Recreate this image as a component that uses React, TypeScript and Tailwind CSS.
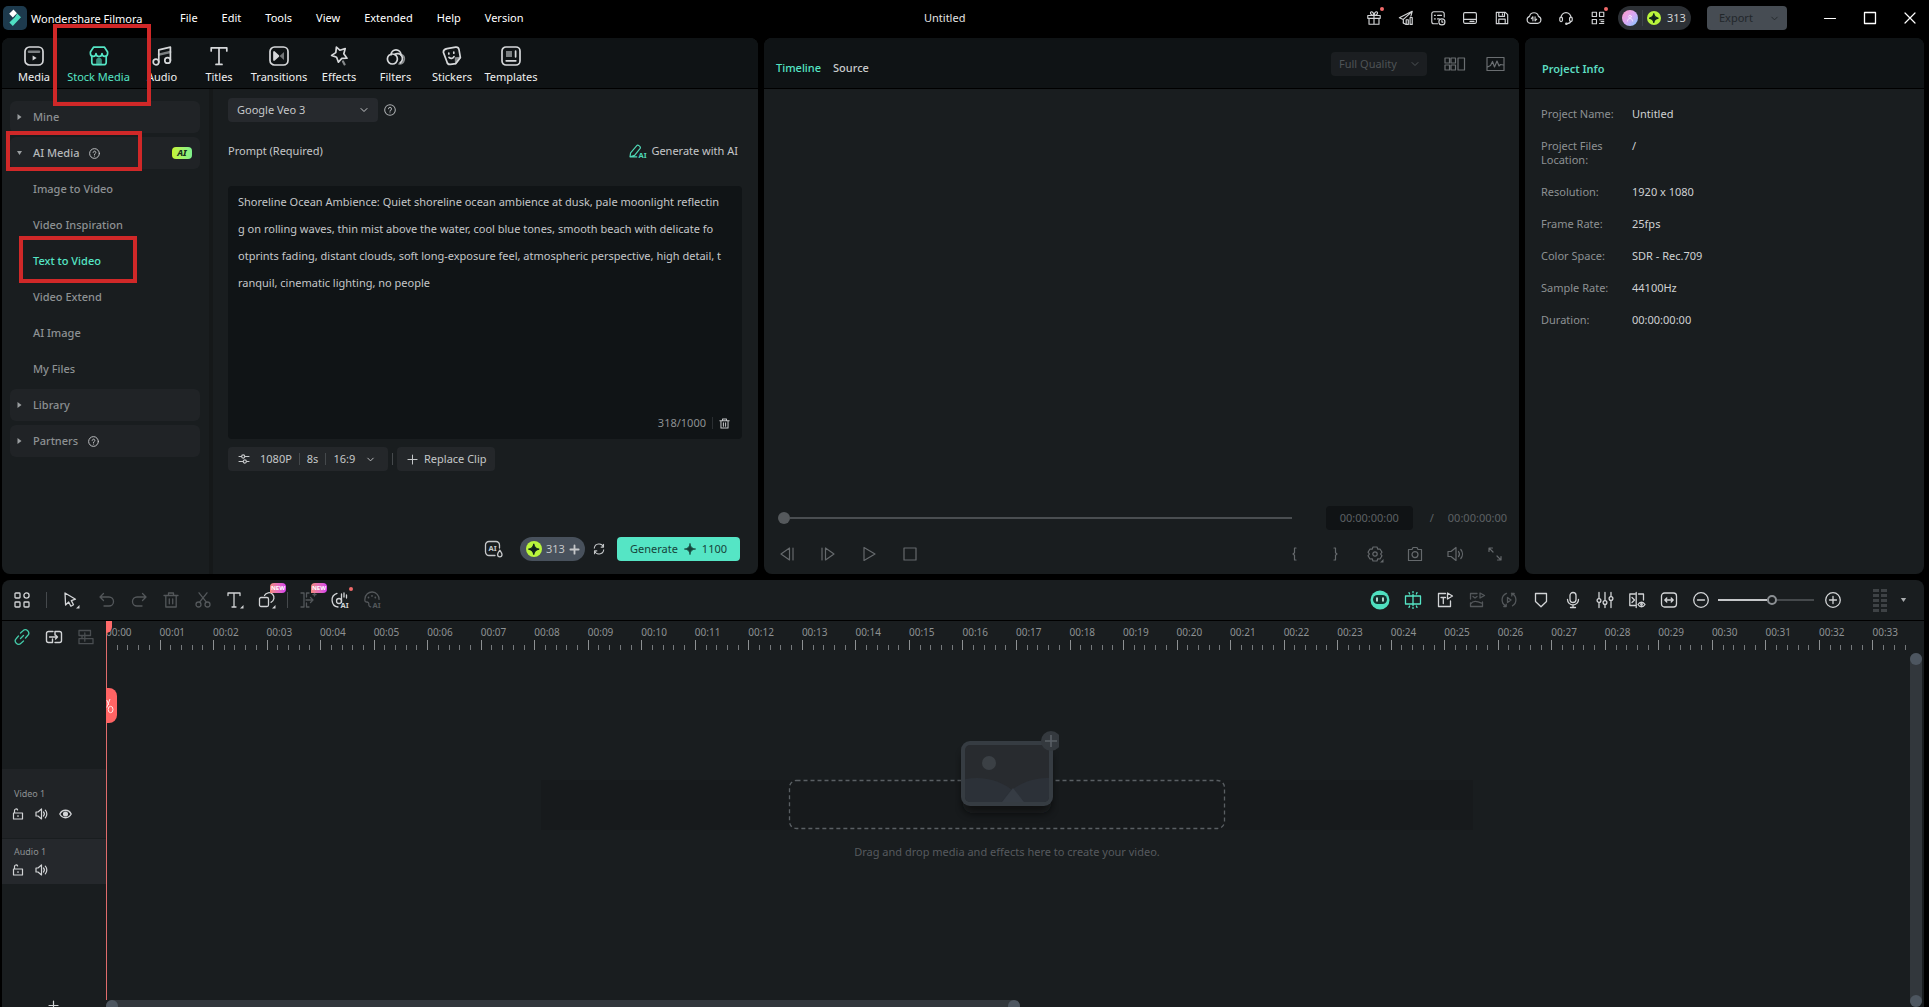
import { useState, type ReactNode } from 'react'
import { ChevronDown } from 'lucide-react'

type IconProps = { size?: number; w?: number; children: ReactNode; className?: string; sw?: number; vb?: string }

function Svg({ size = 18, w, children, className = '', sw = 1.3, vb = '0 0 18 18' }: IconProps) {
  return (
    <svg
      width={w ?? size}
      height={size}
      viewBox={vb}
      fill="none"
      stroke="currentColor"
      strokeWidth={sw}
      strokeLinecap="round"
      strokeLinejoin="round"
      className={`shrink-0 ${className}`}
      aria-hidden="true"
    >
      {children}
    </svg>
  )
}

const SPARK = 'M8 0.5C8.6 5.4 10.6 7.4 15.5 8C10.6 8.6 8.6 10.6 8 15.5C7.4 10.6 5.4 8.6 0.5 8C5.4 7.4 7.4 5.4 8 0.5Z'

const corner = <path d="M17.5 14v3.5H14z" fill="currentColor" stroke="none" />

const MENUS = ['File', 'Edit', 'Tools', 'View', 'Extended', 'Help', 'Version']

const TABS: [string, string, ReactNode][] = [
  ['Media', 'w-[62px]', <><rect x="1" y="1" width="18" height="18" rx="4.5" /><path d="M5 5.8h10" strokeWidth="2.6" opacity=".55" /><path d="M8.6 9.6v4.8l4-2.4z" fill="currentColor" stroke="none" /></>],
  ['Stock Media', 'w-[67px]', <><path d="M4.5 1.2h11L18.6 6v1.6a2.6 2.6 0 0 1-5.6 0 3 3 0 0 1-6 0 2.6 2.6 0 0 1-5.6 0V6z" /><path d="M2.8 10v6.5A2.2 2.2 0 0 0 5 18.7h10a2.2 2.2 0 0 0 2.2-2.2V10" /><path d="M8 18.5v-4a2 2 0 0 1 4 0v4z" fill="currentColor" opacity=".6" /></>],
  ['Audio', 'w-[60px]', <><circle cx="4" cy="16" r="2.8" /><circle cx="15.6" cy="14.4" r="2.8" /><path d="M6.8 16V3.8L18.4 1.2v13" /><path d="M7 8.6l11.2-2.6" strokeWidth="2.4" opacity=".55" /></>],
  ['Titles', 'w-[54px]', <><path d="M2.2 5V1.8h15.6V5M10 1.8v16.4M7 18.4h6" /></>],
  ['Transitions', 'w-[66px]', <><rect x="1" y="1" width="18" height="18" rx="4.5" /><path d="M5 6v8l4.4-4z" fill="currentColor" /><path d="M15 6v8l-4.4-4z" fill="currentColor" opacity=".5" stroke="none" /></>],
  ['Effects', 'w-[54px]', <><path d="M7.4 1.2l3.4 3 5.4-1.6-1.4 5.2 3.2 4.400-5.200.2-3.400 3.800-1.800-5L2.600 9.400 6.800 6.600z" /><path d="M14 15.400l1.600 3" strokeWidth="2.200" opacity=".6" /></>],
  ['Filters', 'w-[59px]', <><path d="M5 8.800a5 5 0 1 1 10 0" /><circle cx="6.400" cy="13" r="5" /><path d="M8.600 8.400a5 5 0 0 1 5.600 8.400" /><path d="M15.600 8.600a5 5 0 0 1-2.600 9.400" opacity=".6" /></>],
  ['Stickers', 'w-[54px]', <><path d="M5 2.600l8.600-1.400a3 3 0 0 1 3.400 2.400l1.400 8-4.600 6-5.400.8a3 3 0 0 1-3.400-2.400L1.400 6.400C1.200 4.200 2.600 3 5 2.600z" /><path d="M18.200 11.600l-4.600.6.2 5.400z" fill="currentColor" opacity=".6" /><path d="M6.800 7v1M11.800 6.200v1M7 11.400c1.600 1.600 4 1.200 5-.8" /></>],
  ['Templates', 'w-16', <><rect x="1" y="1" width="18" height="18" rx="4" /><path d="M5 5h6v6H5z" fill="currentColor" opacity=".55" stroke="none" /><path d="M14.600 5.200v5.600M5.200 14.800h9.600" /></>],
]

const TITLE_ICONS: { name: string; dot?: boolean; d: ReactNode }[] = [
  { name: 'Gift', dot: true, d: <><path d="M2 6.200h14v3.200H2zM3.400 9.400V16h11.200V9.400M9 6.200V16M9 6C4 6 4.400 1.500 6.600 2 8.400 2.400 9 6 9 6s.6-3.600 2.400-4C13.600 1.500 14 6 9 6" /></> },
  { name: 'Share', d: <><path d="M6 14.500V10.600L1.500 8.800 16 1.500l-1.500 5.500M6 10.600L14.500 3" /><path d="M9 16.200l-3-1.700M9.200 11h2.400v5.200H9.200zM13.600 8.400H16v7.800h-2.400z" /></> },
  { name: 'Tasks', d: <><path d="M8.500 15.500H4.200a2.200 2.200 0 0 1-2.200-2.200V4.200A2.200 2.200 0 0 1 4.200 2h9.600A2.200 2.200 0 0 1 16 4.200V8M5 6h1M8.500 6H13M5 10h1M8.500 10h2" /><circle cx="13.400" cy="13.400" r="3.400" /><path d="M13.400 11.800v1.800h1.200" /></> },
  { name: 'Layout', d: <><rect x="1.800" y="3" width="14.400" height="12" rx="1.400" /><path d="M2 10.600h14M9 12.800h4.500" /></> },
  { name: 'Save', d: <><path d="M2.600 2.600h10.200l2.600 2.600v10.200H2.600zM5.400 2.800v4.400h6.400V2.800M5.400 15.200v-5h7.200v5M9.500 4.200v1.400" /></> },
  { name: 'Cloud', d: <><path d="M5 15a4 4 0 0 1-1-7.800 5.100 5.100 0 0 1 10 0A4 4 0 0 1 13 15z" /><path d="M7.800 12.200V7.600L6 9.600M10.200 7.600v4.600L12 10.200" /></> },
  { name: 'Support', d: <><path d="M3.400 8.600a5.600 5.600 0 0 1 11.200 0M14.600 12.400c-.6 2-2 2.800-4.400 3" /><rect x="2" y="8" width="3" height="5" rx="1.400" /><rect x="13" y="8" width="3" height="5" rx="1.400" /><circle cx="9.400" cy="15.400" r=".8" /></> },
  { name: 'Apps', dot: true, d: <><path d="M2.500 2.500h4.800v4.800H2.500zM10.700 2.500h4.800v4.800h-4.800zM2.500 10.700h4.800v4.800H2.500zM10.700 11h4.800M10.700 15.200h4.800M12.500 13.100h3" /></> },
]

const AI_ITEMS = ['Image to Video', 'Video Inspiration', 'Text to Video', 'Video Extend', 'AI Image', 'My Files']

const INFO: [string, string][] = [
  ['Project Name:', 'Untitled'],
  ['Project Files Location:', '/'],
  ['Resolution:', '1920 x 1080'],
  ['Frame Rate:', '25fps'],
  ['Color Space:', 'SDR - Rec.709'],
  ['Sample Rate:', '44100Hz'],
  ['Duration:', '00:00:00:00'],
]

const PROMPT = `Shoreline Ocean Ambience: Quiet shoreline ocean ambience at dusk, pale moonlight reflectin
g on rolling waves, thin mist above the water, cool blue tones, smooth beach with delicate fo
otprints fading, distant clouds, soft long-exposure feel, atmospheric perspective, high detail, t
ranquil, cinematic lighting, no people`

function Help({ size = 12, className = '' }: { size?: number; className?: string }) {
  return (
    <Svg size={size} className={className} vb="0 0 14 14" sw={1.200}>
      <circle cx="7" cy="7" r="6.200" />
      <path d="M5.300 5.600a1.700 1.700 0 1 1 2.600 1.500c-.7.4-.9.700-.9 1.300M7 10.200v.1" />
    </Svg>
  )
}

function Coin({ size = 14 }: { size?: number }) {
  return (
    <svg width={size} height={size} viewBox="0 0 16 16" className="shrink-0" aria-hidden="true">
      <circle cx="8" cy="8" r="8" fill="#b9f53c" />
      <g transform="translate(2 2.400) scale(.72)" fill="#10231c"><path d={SPARK} stroke="#10231c" strokeWidth="1.600" /></g>
    </svg>
  )
}

function TitleBar() {
  return (
    <header className="flex h-[38px] shrink-0 items-start pt-1.5 pl-[3px]">
      <div className="flex h-6 w-[177px] items-center gap-1">
        <svg width="24" height="24" viewBox="0 0 24 24" aria-hidden="true">
          <rect width="24" height="24" rx="5" fill="#1d3a4d" />
          <path d="M10.500 3.600L14 7.200 9.800 11.400 6.200 7.800z" fill="#fff" />
          <path d="M14.200 7.400L18 11.200 9.800 20 6.400 16.400 11.800 11.200z" fill="#4fe0c3" />
        </svg>
        <span className="pt-0.5 text-white">Wondershare Filmora</span>
      </div>
      <nav className="flex h-6 items-center gap-6 text-white">
        {MENUS.map((m) => <button key={m}>{m}</button>)}
      </nav>
      <div className="flex h-6 flex-1 items-center justify-center text-[#e4e4e4]">Untitled</div>
      <div className="flex h-6 items-center text-[#d2d4d6]">
        <div className="flex gap-4">
          {TITLE_ICONS.map((i) => (
            <button key={i.name} aria-label={i.name} className="relative">
              <Svg size={16}>{i.d}</Svg>
              {i.dot && <span className="absolute -top-[3px] -right-0.5 size-1 rounded-full bg-[#f06a6a]" />}
            </button>
          ))}
        </div>
        <div className="ml-3 flex h-6 w-[73px] items-center rounded-full bg-[#2c3035] pl-1">
          <span className="flex size-4 items-center justify-center rounded-full bg-linear-to-br from-[#ff9ac6] via-[#d9a8f5] to-[#6fc5ff]">
            <Svg size={8} className="text-white/70" sw={2}><circle cx="9" cy="6" r="3" /><path d="M3 16a6 6 0 0 1 12 0" /></Svg>
          </span>
          <span className="mx-1 h-4 w-px bg-[#3c4148]" />
          <Coin />
          <span className="ml-1.5">313</span>
        </div>
        <button disabled className="ml-4 flex h-6 w-20 items-center rounded bg-[#464c53] pl-3 text-[#22272b]">
          Export <ChevronDown size={11} className="ml-4" />
        </button>
        <button aria-label="Minimize" className="ml-[34px] text-white"><Svg size={18} sw={1.200}><path d="M3.500 9.500h11" /></Svg></button>
        <button aria-label="Maximize" className="ml-[22px] text-white"><Svg size={18} sw={1.300}><path d="M3.500 3.500h11v11h-11z" /></Svg></button>
        <button aria-label="Close" className="mr-2.5 ml-[22px] text-white"><Svg size={18} sw={1.200}><path d="M4 4l10 10M14 4L4 14" /></Svg></button>
      </div>
    </header>
  )
}

function Group({ label, open = false, help = false, badge = false }: { label: string; open?: boolean; help?: boolean; badge?: boolean }) {
  return (
    <button className={`flex h-8 items-center rounded-md bg-[#202326] pl-[7px] font-medium ${open ? 'text-[#b4b7b9]' : 'text-[#8d9193]'}`}>
      <svg width="5" height="6" viewBox="0 0 5 6" fill="#9a9ea0" aria-hidden="true">
        {open ? <path d="M0 1h5L2.500 5z" /> : <path d="M.5 0v6L4.500 3z" />}
      </svg>
      <span className="ml-[11px]">{label}</span>
      {help && <Help size={11} className="ml-2.5 text-[#c5c7c9]" />}
      {badge && (
        <span className="mr-2 ml-auto h-3 w-5 rounded-sm bg-linear-to-r from-[#c6f52c] to-[#7df08c] text-center text-[9px] leading-3 font-extrabold text-[#17301c] italic">AI</span>
      )}
    </button>
  )
}

function Sidebar() {
  const [active, setActive] = useState('Text to Video')
  return (
    <aside className="flex w-[211px] shrink-0 flex-col gap-1 border-r-4 border-[#151819] pt-3 pr-[9px] pl-2">
      <Group label="Mine" />
      <Group label="AI Media" open help badge />
      {AI_ITEMS.map((t) => (
        <button
          key={t}
          onClick={() => setActive(t)}
          className={`h-8 pl-[23px] text-left font-medium ${t === active ? 'text-[#55e5c5]' : 'text-[#8d9193]'}`}
        >
          {t}
        </button>
      ))}
      <Group label="Library" />
      <Group label="Partners" help />
    </aside>
  )
}

function Generator() {
  return (
    <section className="flex min-w-0 flex-1 flex-col pt-[9px] pr-4 pb-[13px] pl-[15px]">
      <div className="flex items-center gap-1.5">
        <label className="relative flex h-6 w-[150px] items-center">
          <select aria-label="Model" className="size-full appearance-none rounded bg-[#26292d] pl-[9px] text-[#c5c7c9]">
            <option>Google Veo 3</option>
          </select>
          <ChevronDown size={12} className="pointer-events-none absolute right-2 text-[#c5c7c9]" />
        </label>
        <button aria-label="Model help"><Help size={12} className="text-[#b0b3b5]" /></button>
      </div>
      <div className="mt-[17px] flex h-6 items-center justify-between text-[#c5c7c9]">
        <label htmlFor="prompt">Prompt (Required)</label>
        <button className="mr-1 flex items-center gap-1">
          <svg width="18" height="14" viewBox="0 0 18 14" fill="none" stroke="#4fd6b5" strokeWidth="1.200" strokeLinejoin="round" aria-hidden="true">
            <path d="M1 12.800l.6-4L7.800 1.600c1-1.200 4.400 1 3.400 2.800L5.600 11.400 1 12.800h7.200" />
            <text x="9.500" y="13.500" fill="#4fd6b5" stroke="none" fontSize="7.500" fontWeight="700">AI</text>
          </svg>
          Generate with AI
        </button>
      </div>
      <div className="mt-[23px] flex flex-[253] flex-col rounded bg-[#101416]">
        <textarea
          id="prompt"
          defaultValue={PROMPT}
          className="flex-1 resize-none overflow-hidden bg-transparent px-2.5 pt-0.5 leading-[27px] text-[#c5c7c9] outline-none"
        />
        <div className="flex h-8 items-center justify-end pr-3 text-[#8d9193]">
          318/1000
          <span className="mx-1.5 h-3 w-px bg-[#2a2e31]" />
          <button aria-label="Clear prompt" className="text-[#c5c7c9]">
            <Svg size={11} vb="0 0 14 14"><path d="M1 3.500h12M4.500 3.300V1.300h5v2M2.500 3.700v9h9v-9M5.600 6v4.500M8.400 6v4.500" /></Svg>
          </button>
        </div>
      </div>
      <div className="mt-2 flex h-6 items-center text-[#c5c7c9]">
        <button className="flex h-6 w-40 items-center rounded bg-[#24272a] pl-2.5">
          <Svg size={12} vb="0 0 12 12" sw={1.100}><path d="M1 3.500h2.600M6.800 3.500H11M1 8.500h4.200M8.400 8.500H11" /><circle cx="5.200" cy="3.500" r="1.600" /><circle cx="6.800" cy="8.500" r="1.600" /></Svg>
          <span className="ml-2.5">1080P</span>
          <span className="mx-[7px] h-3 w-px bg-[#45494c]" />
          8s
          <span className="mx-[7px] h-3 w-px bg-[#45494c]" />
          16:9
          <ChevronDown size={11} className="ml-2.5" />
        </button>
        <span className="mx-1 h-3 w-px bg-[#45494c]" />
        <button className="flex h-6 items-center gap-1.5 rounded bg-[#24272a] pr-2 pl-2.5">
          <Svg size={11} vb="0 0 12 12" sw={1.100}><path d="M6 1v10M1 6h10" /></Svg>
          Replace Clip
        </button>
      </div>
      <div className="flex-[66]" />
      <div className="mr-0.5 flex h-6 items-center justify-end text-[#c5c7c9]">
        <button aria-label="AI watermark" className="mr-4">
          <Svg size={18} w={20} vb="0 0 20 18">
            <path d="M11 15.500H5A3.500 3.500 0 0 1 1.500 12V5A3.500 3.500 0 0 1 5 1.500h7A3.500 3.500 0 0 1 15.500 5v3M15.800 10.200c1.400 2 2.200 3.200 2.200 4.400a2.200 2.200 0 0 1-4.400 0c0-1.200.8-2.400 2.200-4.400z" />
            <text x="4.500" y="11" fill="currentColor" stroke="none" fontSize="7.500" fontWeight="700">AI</text>
          </Svg>
        </button>
        <button className="flex h-6 w-[65px] items-center rounded-full bg-[#48515c] pl-1.5">
          <Coin size={16} />
          <span className="ml-1">313</span>
          <Svg size={11} vb="0 0 12 12" sw={2} className="ml-1"><path d="M6 1.500v9M1.500 6h9" /></Svg>
        </button>
        <button aria-label="Refresh" className="ml-2">
          <Svg size={12} vb="0 0 14 14" sw={1.200}><path d="M1.500 6a5.600 5.600 0 0 1 10.800-1.200V1.500M12.500 8a5.600 5.600 0 0 1-10.800 1.200v3.300M12.300 4.800H9.500M1.700 9.200h2.800" /></Svg>
        </button>
        <button className="ml-3 flex h-6 w-[123px] items-center justify-center gap-1.5 rounded bg-[#55e5c5] text-[#16433a]">
          Generate
          <svg width="12" height="12" viewBox="0 0 16 16" fill="#16433a" stroke="#16433a" aria-hidden="true"><path d={SPARK} /></svg>
          1100
        </button>
      </div>
    </section>
  )
}

function MediaPanel() {
  return (
    <div className="flex min-w-0 flex-[756] flex-col overflow-hidden rounded-lg bg-[#191d1f]">
      <nav className="flex h-[51px] shrink-0 border-b border-black bg-[#0f1315] pl-px">
        {TABS.map(([label, width, d], i) => (
          <button key={label} className={`flex flex-col items-center pt-2 ${width} ${i === 1 ? 'text-[#55e5c5]' : 'text-[#d6d8da]'}`}>
            <Svg size={20} sw={1.700} vb="0 0 20 20">{d}</Svg>
            <span className={`mt-[3px] leading-4 whitespace-nowrap ${i === 1 ? '' : 'text-[#f0f0f0]'}`}>{label}</span>
          </button>
        ))}
      </nav>
      <div className="flex min-h-0 flex-1">
        <Sidebar />
        <Generator />
      </div>
    </div>
  )
}

const PLAY_ICONS: [string, ReactNode][] = [
  ['Previous frame', <path d="M11.500 3v12L3 9zM15 3v12" />],
  ['Next frame', <path d="M6.500 3v12L15 9zM3 3v12" />],
  ['Play', <path d="M4 2.500v13L15 9z" />],
  ['Stop', <path d="M3 3h12v12H3z" />],
]
const VIEW_ICONS: [string, ReactNode][] = [
  ['Mark in', <path d="M10 3H8.500v4.800L7 9l1.500 1.200V15H10" />],
  ['Mark out', <path d="M8 3h1.500v4.800L11 9l-1.500 1.200V15H8" />],
  ['Settings', <><path d="M7 2h4l.8 2.200L14 4l2 3.200L14.600 9l1.400 1.800L14 14l-2.200-.2L11 16H7l-.8-2.200L4 14l-2-3.200L3.400 9 2 7.200 4 4l2.200.2z" /><circle cx="9" cy="9" r="2.200" />{corner}</>],
  ['Snapshot', <><path d="M2.500 4.500H6L7 2.500h4l1 2h3.500v11h-13z" /><circle cx="9" cy="9.600" r="3" /></>],
  ['Volume', <path d="M2 6.500h3L10 2.500v13l-5-4H2zM12.500 6.500a4 4 0 0 1 0 5M14.800 4.500a7 7 0 0 1 0 9" />],
  ['Full screen', <path d="M3 6.500V3h3.500M3.200 3.200L7 7M15 11.500V15h-3.500M14.800 14.800L11 11" />],
]

function PreviewPanel() {
  return (
    <div className="flex min-w-0 flex-[755] flex-col overflow-hidden rounded-lg bg-[#191d1f]">
      <div className="flex h-[51px] shrink-0 items-center border-b border-black bg-[#0f1315] pt-0.5 pr-[14px] pl-3">
        <div className="flex gap-3 pt-2 font-medium">
          <button className="text-[#55e5c5]">Timeline</button>
          <button className="text-[#c9cbcc]">Source</button>
        </div>
        <label className="relative ml-auto flex h-6 w-24 items-center">
          <select aria-label="Quality" disabled className="size-full appearance-none rounded bg-[#1b1e21] pl-2 text-[#4e5356] opacity-100">
            <option>Full Quality</option>
          </select>
          <ChevronDown size={12} className="absolute right-1.5 text-[#4e5356]" />
        </label>
        <button aria-label="Multi view" className="ml-[17px] text-[#6a6e71]">
          <Svg size={16} w={22} vb="0 0 22 16" sw={1.200}><path d="M1 2h4.500v5H1zM7 2h4.500v5H7zM1 9h4.500v5H1zM7 9h4.500v5H7zM14 2h6.500v12H14z" /></Svg>
        </button>
        <button aria-label="Scopes" className="ml-5 text-[#6a6e71]">
          <Svg size={16} w={19} vb="0 0 19 16" sw={1.200}><path d="M1 1.500h17v13H1zM1.500 11l3-1.500 2-4 2 5.500 2.500-6 2 5 1.500-1.500 3 .5" /></Svg>
        </button>
      </div>
      <div className="min-h-0 flex-1" />
      <div className="flex h-6 items-center pr-3 pl-[14px] text-[#5d6164]">
        <div className="relative flex flex-1 items-center">
          <input type="range" aria-label="Playback position" defaultValue={0} className="absolute inset-0 w-full opacity-0" />
          <span className="size-3 rounded-full bg-[#55595c]" />
          <span className="h-0.5 flex-1 bg-[#4a4e51]" />
        </div>
        <span className="ml-[34px] flex h-6 w-[87px] items-center justify-center rounded bg-[#101315]">00:00:00:00</span>
        <span className="ml-[17px]">/</span>
        <span className="ml-3.5">00:00:00:00</span>
      </div>
      <div className="mt-[15px] mb-[11px] flex h-[18px] items-center pr-[15px] pl-[14px] text-[#65696c]">
        <div className="flex gap-[23px]">
          {PLAY_ICONS.map(([n, d]) => <button key={n} aria-label={n}><Svg sw={1.200}>{d}</Svg></button>)}
        </div>
        <div className="ml-auto flex gap-[22px]">
          {VIEW_ICONS.map(([n, d]) => <button key={n} aria-label={n}><Svg sw={1.200}>{d}</Svg></button>)}
        </div>
      </div>
    </div>
  )
}

function InfoPanel() {
  return (
    <div className="flex min-w-0 flex-[399] flex-col overflow-hidden rounded-lg bg-[#191d1f]">
      <div className="flex h-[51px] shrink-0 items-center border-b border-black bg-[#0f1315] pt-3 pl-[17px]">
        <h2 className="font-semibold text-[#5cdcc0]">Project Info</h2>
      </div>
      <dl className="flex flex-col gap-[18px] pt-[18px] pl-4 leading-[14px]">
        {INFO.map(([k, v]) => (
          <div key={k} className="flex">
            <dt className="w-[91px] pr-3 text-[#8d9193]">{k}</dt>
            <dd className="whitespace-nowrap text-[#cfd1d3]">{v}</dd>
          </div>
        ))}
      </dl>
    </div>
  )
}

type Tool = { name: string; dim?: boolean; badge?: boolean; dot?: boolean; accent?: boolean; d: ReactNode }

const aiText = <text x="9.500" y="17" fill="currentColor" stroke="none" fontSize="7.500" fontWeight="700">AI</text>

const POINTER: Tool = { name: 'Select', d: <><path d="M3 2l10.500 6.200-4.200 1.400 2.200 4.200-2.600 1.400-2.200-4.200L3.600 14z" />{corner}</> }

const EDIT_TOOLS: Tool[] = [
  { name: 'Undo', dim: true, d: <path d="M5.500 2.500L2 6l3.500 3.500M2.300 6H11a4.500 4.500 0 0 1 0 9H6" /> },
  { name: 'Redo', dim: true, d: <path d="M12.500 2.500L16 6l-3.500 3.500M15.700 6H7a4.500 4.500 0 0 0 0 9h5" /> },
  { name: 'Delete', dim: true, d: <path d="M2 4.500h14M6.500 4.300V2h5v2.300M3.800 4.700V16h10.400V4.700M7.300 8v4.800M10.700 8v4.800" /> },
  { name: 'Cut', dim: true, d: <><circle cx="4.500" cy="13.500" r="2.500" /><circle cx="13.500" cy="13.500" r="2.500" /><path d="M5.600 11.200L13 1.800M12.400 11.200L5 1.800" /></> },
  { name: 'Text', d: <><path d="M2 4.500V2h12v2.500M8 2v14M6 16h4" />{corner}</> },
  { name: 'Shape', badge: true, d: <><rect x="1.500" y="6.500" width="9" height="9" rx="1.500" /><path d="M6.500 4.500a5 5 0 1 1 6.500 6.800" />{corner}</> },
]
const AI_TOOLS: Tool[] = [
  { name: 'Smart trim', dim: true, badge: true, d: <path d="M2 2h3v14H2M10 2H7.500v4M7.500 12v4H10M7 9h7M11.500 6.500L14 9l-2.500 2.500M15.500 2v3M14 3.500h3" /> },
  { name: 'AI audio', dot: true, d: <><path d="M6 2.400a7 7 0 0 0 1 13.600M10.500 3v8.500" /><circle cx="8" cy="10" r="2.500" /><path d="M13 2v4M15.500 4v3" />{aiText}</> },
  { name: 'AI color', dim: true, d: <><path d="M7.800 15.800a2 2 0 0 1-2-2.200c.2-1.600-.6-2.600-2.200-2.600C1.800 11 1.600 9.400 2 7.600A7 7 0 0 1 16 8.400" /><path d="M5.500 6.500v.1M9 4.800v.1M12.300 6.500v.1" strokeWidth="1.800" />{aiText}</> },
]
const TRACK_TOOLS: Tool[] = [
  { name: 'Auto ripple', accent: true, d: <path d="M1.500 5h15v8h-15zM9 3.500v11M9 .6v1M9 17.400v-1M5 1.600l.6 1.400M13 1.600l-.6 1.400M5 16.400l.6-1.400M13 16.400l-.6-1.400" /> },
  { name: 'Template', d: <><path d="M9.500 2.500H2.500v13h12V10M5 6.500h4.500M7.300 6.500v6" /><path d="M11.500 2v6l5-3z" /></> },
  { name: 'Replace', dim: true, d: <path d="M9 2.500H2.500V8M2.500 12v3.500h12V11M2.500 13c3-4 6-3 12-.5M12 2v5l4.500-2.500zM5 5.500L7 7l2-1.500" /> },
  { name: 'Speed', dim: true, d: <path d="M6.500 2.300a7 7 0 0 0-1 12.500M3.800 15.500h2.400v-2.400M11.500 2.300a7 7 0 0 1 1 12.500M14.200 2.500h-2.400v2.400M7.500 6.500v5l3.500-2.500z" /> },
  { name: 'Marker', d: <path d="M3.500 2.500h11v8L9 15.800 3.500 10.500z" /> },
  { name: 'Record', d: <><rect x="6" y="1.500" width="6" height="10" rx="3" /><path d="M3.500 8.500a5.500 5.500 0 0 0 11 0M9 14v2.500M6.500 16.500h5" /></> },
  { name: 'Mixer', d: <><path d="M3 1.500v6M3 11.500v5M9 1.500v8M9 13.500v3M15 1.500v4M15 9.500v7" /><circle cx="3" cy="9.500" r="1.900" /><circle cx="9" cy="11.500" r="1.900" /><circle cx="15" cy="7.500" r="1.900" /></> },
  { name: 'Preview render', d: <><path d="M7 3H1.800v11.500H7M8.200 1.500v15M10.500 3h5v6M4 6.500L6.500 9 4 11.500" /><path d="M10 13.500c1.800-3 5.200-3 7 0-1.800 3-5.200 3-7 0z" /><circle cx="13.500" cy="13.500" r=".8" /></> },
  { name: 'Fit timeline', d: <><rect x="1.500" y="2" width="15" height="14" rx="3" /><path d="M5 9h8M6.800 7L4.800 9l2 2M11.200 7l2 2-2 2" /></> },
]

function ToolButton({ t }: { t: Tool }) {
  const color = t.accent ? 'text-[#55e5c5]' : t.dim ? 'text-[#53575a]' : 'text-[#d2d4d6]'
  return (
    <button aria-label={t.name} className={`relative ${color}`}>
      <Svg>{t.d}</Svg>
      {t.badge && (
        <span className="absolute -top-2 left-3 h-2.5 w-4 rounded-sm rounded-bl-none bg-linear-to-r from-[#f58a7c] to-[#d93bf0] text-center text-[6px] leading-2.5 font-bold text-white">NEW</span>
      )}
      {t.dot && <span className="absolute -top-1 -right-1 size-1 rounded-full bg-[#f06a6a]" />}
    </button>
  )
}

function TimelineToolbar() {
  return (
    <div className="flex h-[41px] shrink-0 items-center border-b border-black pr-[17px] pl-[11px] text-[#d2d4d6]">
      <button aria-label="Workspace">
        <Svg><rect x="2" y="2" width="5" height="5" rx=".8" /><circle cx="13.500" cy="4.500" r="2.600" /><rect x="2" y="11" width="5" height="5" rx=".8" /><rect x="11" y="11" width="5" height="5" rx=".8" /></Svg>
      </button>
      <span className="mx-[15px] h-4 w-px bg-[#45494c]" />
      <ToolButton t={POINTER} />
      <div className="ml-[18px] flex gap-3.5">
        {EDIT_TOOLS.map((t) => <ToolButton key={t.name} t={t} />)}
      </div>
      <span className="mx-[11px] h-4 w-px bg-[#45494c]" />
      <div className="flex gap-3.5">
        {AI_TOOLS.map((t) => <ToolButton key={t.name} t={t} />)}
      </div>
      <div className="ml-auto flex items-center gap-3.5">
        <button aria-label="Assistant">
          <svg width="20" height="20" viewBox="0 0 20 20" aria-hidden="true">
            <circle cx="10" cy="10" r="9.500" fill="#4fe0c0" />
            <rect x="3" y="5" width="14" height="9" rx="4.500" fill="#12302c" />
            <path d="M7 8v3M13 8v3" stroke="#d8fff5" strokeWidth="1.600" strokeLinecap="round" />
          </svg>
        </button>
        {TRACK_TOOLS.map((t) => <ToolButton key={t.name} t={t} />)}
      </div>
      <button aria-label="Zoom out" className="ml-3.5"><Svg><circle cx="9" cy="9" r="7.300" /><path d="M5.500 9h7" /></Svg></button>
      <div className="relative mr-2.5 ml-2 flex w-24 items-center">
        <input type="range" aria-label="Timeline zoom" defaultValue={56} className="absolute inset-0 w-full opacity-0" />
        <span className="h-0.5 w-[49px] bg-[#c5c7c9]" />
        <span className="size-2.5 rounded-full border-2 border-[#8b8f93]" />
        <span className="h-0.5 flex-1 bg-[#45494c]" />
      </div>
      <button aria-label="Zoom in"><Svg><circle cx="9" cy="9" r="7.300" /><path d="M5.500 9h7M9 5.500v7" /></Svg></button>
      <div className="mr-[13px] ml-[31px] grid grid-cols-2 gap-x-0.5 gap-y-0.5">
        {Array.from({ length: 10 }, (_, i) => <span key={i} className="h-[3px] w-1.5 bg-[#3e4245]" />)}
      </div>
      <button aria-label="Meter options">
        <svg width="7" height="6" viewBox="0 0 7 6" fill="#a8abad" aria-hidden="true"><path d="M.8 1h5.400L3.500 5z" /></svg>
      </button>
    </div>
  )
}

function Ruler() {
  return (
    <div className="-mr-0.5 grid h-[32px] shrink-0 grid-cols-[repeat(34,minmax(0,1fr))] overflow-hidden">
      {Array.from({ length: 34 }, (_, s) => (
        <div key={s} className="flex flex-col pt-1">
          <span className="h-[15px] text-[10px] leading-[15px] text-[#8d9193]">00:{String(s).padStart(2, '0')}</span>
          <div className="grid h-2.5 grid-cols-5 items-end">
            {[0, 1, 2, 3, 4].map((i) => (
              <span key={i} className={`w-px ${i === 0 ? 'h-2.5 bg-[#8d9193]' : 'h-[5px] bg-[#74787b]'} ${s === 33 && i === 4 ? 'invisible' : ''}`} />
            ))}
          </div>
        </div>
      ))}
    </div>
  )
}

const lock = <Svg size={12} vb="0 0 12 12" sw={1.200}><path d="M1.500 5h9v6h-9zM2.500 5V2.600A1.600 1.600 0 0 1 5.600 2M6 7.500v1" /></Svg>
const speaker = <Svg size={12} w={13} vb="0 0 13 12" sw={1.200}><path d="M1 4h2L6.500 1v10L3 8H1zM8.500 4a3 3 0 0 1 0 4M10.300 2.200a5.500 5.500 0 0 1 0 7.600" /></Svg>
const eye = <Svg size={12} w={13} vb="0 0 13 12" sw={1.300}><path d="M.8 6c2.600-5 8.800-5 11.400 0-2.600 5-8.800 5-11.400 0z" /><circle cx="6.500" cy="6" r="1.900" fill="currentColor" /></Svg>

function TrackHeaders() {
  return (
    <div className="flex w-[104px] shrink-0 flex-col text-[#d2d4d6]">
      <div className="flex h-8 items-center gap-3.5 pl-[11px]">
        <button aria-label="Link" className="text-[#44c9a8]"><Svg><path d="M7.500 5L10 2.800a3.300 3.300 0 0 1 4.700 4.700L12.500 10M10.500 13L8 15.200a3.300 3.300 0 0 1-4.700-4.700L5.500 8M7.500 10.500l3-3" /></Svg></button>
        <button aria-label="Magnet"><Svg sw={1.400}><path d="M8 3.500H3.500a2 2 0 0 0-2 2v7a2 2 0 0 0 2 2H7.500V11M10 7V3.500h4.500a2 2 0 0 1 2 2v7a2 2 0 0 1-2 2H10M4.500 9h8M10.500 7l2 2-2 2" /></Svg></button>
        <button aria-label="Stack" className="text-[#4a4e51]"><Svg><path d="M2 2.500h11.500v5H2zM5 7.500v3.200M2 10.700h14v5H2zM7.800 4.800v8.400" /></Svg></button>
      </div>
      <div className="min-h-0 flex-[115]" />
      <div className="flex h-[69px] shrink-0 flex-col bg-[#202326] pt-[18px] pl-2.5">
        <span className="pl-0.5 text-[9px] leading-[14px] text-[#8d9193]">Video 1</span>
        <div className="mt-[7px] flex gap-[11px]">
          <button aria-label="Lock video 1">{lock}</button>
          <button aria-label="Mute video 1">{speaker}</button>
          <button aria-label="Hide video 1">{eye}</button>
        </div>
      </div>
      <div className="mt-px flex h-[45px] shrink-0 flex-col bg-[#25282c] pt-1.5 pl-2.5">
        <span className="pl-0.5 text-[9px] leading-[14px] text-[#8d9193]">Audio 1</span>
        <div className="mt-[5px] flex gap-[11px]">
          <button aria-label="Lock audio 1">{lock}</button>
          <button aria-label="Mute audio 1">{speaker}</button>
        </div>
      </div>
      <div className="min-h-0 flex-[116]" />
      <button aria-label="Add track" className="-mb-1 ml-[46px] self-start">
        <Svg size={11} vb="0 0 11 11" sw={1.200}><path d="M5.500 1v9M1 5.500h9" /></Svg>
      </button>
    </div>
  )
}

function DropZone() {
  return (
    <div className="flex min-h-0 min-w-0 flex-1 flex-col items-center justify-center pr-0.5 pb-3.5">
      <div className="relative flex h-[50px] w-[932px] max-w-full items-center justify-center bg-[#171a1c]">
        <div className="flex h-full w-[436px] justify-center">
          <svg width="100%" height="50" className="overflow-visible" aria-hidden="true">
            <rect x="0.500" y="0.500" width="435" height="48" rx="7" fill="none" stroke="#5a5f63" strokeWidth="1.300" strokeDasharray="4 3" />
          </svg>
        </div>
        <div className="absolute -top-[49px]">
          <svg width="104" height="96" viewBox="0 0 104 96" aria-hidden="true">
            <defs>
              <clipPath id="pic"><rect x="10" y="14" width="84" height="57" rx="5" /></clipPath>
              <filter id="soft" x="-20%" y="-20%" width="140%" height="150%"><feGaussianBlur stdDeviation="4" /></filter>
            </defs>
            <rect x="8" y="20" width="88" height="62" rx="9" fill="#0d0f10" filter="url(#soft)" opacity=".7" />
            <rect x="6" y="10" width="92" height="65" rx="9" fill="#363c42" />
            <rect x="10" y="14" width="84" height="57" rx="5" fill="#282b2f" />
            <g clipPath="url(#pic)">
              <circle cx="34" cy="32" r="7" fill="#3b4045" />
              <ellipse cx="22" cy="93" rx="52" ry="46" fill="#2c3138" />
              <ellipse cx="92" cy="93" rx="52" ry="46" fill="#2c3138" />
              <path d="M44 75L58 57L72 75Z" fill="#363c44" />
            </g>
            <circle cx="96" cy="10" r="10" fill="#34393e" />
            <path d="M96 4v12M90 10h12" stroke="#5a6066" strokeWidth="1.600" />
          </svg>
        </div>
      </div>
      <p className="mt-3.5 text-[#565a5e]">Drag and drop media and effects here to create your video.</p>
    </div>
  )
}

function Playhead() {
  return (
    <div className="pointer-events-none absolute top-0 bottom-[7px] left-0 w-px bg-[#e06c6c]">
      <span className="absolute top-0 left-0 h-3 w-1.5 rounded-br-md bg-[#ff6b6b]" />
      <span className="absolute top-[67px] left-0 flex h-[35px] w-[11px] items-center rounded-r-lg bg-[#ff6464]">
        <svg width="8" height="16" viewBox="0 0 8 16" fill="none" stroke="#fff" strokeWidth="1" opacity=".85" aria-hidden="true">
          <path d="M4 1L.8 9.500M.8 2l2 5" /><ellipse cx="4.600" cy="11.500" rx="2.400" ry="3.200" />
        </svg>
      </span>
    </div>
  )
}

function Timeline() {
  return (
    <div className="flex min-h-0 flex-[427] flex-col overflow-hidden rounded-t-lg bg-[#191d1f]">
      <TimelineToolbar />
      <div className="flex min-h-0 flex-1">
        <TrackHeaders />
        <div className="relative flex min-w-0 flex-1 flex-col">
          <Ruler />
          <div className="flex min-h-0 flex-1">
            <div className="flex min-w-0 flex-1 flex-col">
              <DropZone />
              <div className="flex h-[7px] shrink-0 overflow-hidden">
                <div className="flex h-3 w-[914px] justify-between rounded-full bg-[#32373c]">
                  <span className="size-3 rounded-full bg-[#4d5660]" />
                  <span className="size-3 rounded-full bg-[#4d5660]" />
                </div>
              </div>
            </div>
            <div className="mr-0.5 flex w-3 flex-col justify-between rounded-full bg-[#32373c]">
              <span className="size-3 rounded-full bg-[#4d5660]" />
              <span className="size-3 rounded-full bg-[#4d5660]" />
            </div>
          </div>
          <Playhead />
        </div>
      </div>
    </div>
  )
}

export default function App() {
  return (
    <div className="relative flex h-screen flex-col overflow-hidden bg-black font-['Noto_Sans','Open_Sans',sans-serif] text-[11px] leading-4">
      <TitleBar />
      <main className="flex min-h-0 flex-1 flex-col gap-1.5 pr-[5px] pl-0.5">
        <div className="flex min-h-0 flex-[536] gap-1.5">
          <MediaPanel />
          <PreviewPanel />
          <InfoPanel />
        </div>
        <Timeline />
      </main>
      <div className="pointer-events-none absolute top-6 left-[53px] h-[82px] w-[98px] border-4 border-[#d02828]" />
      <div className="pointer-events-none absolute top-[131px] left-1.5 h-10 w-[136px] border-4 border-[#d02828]" />
      <div className="pointer-events-none absolute top-[236px] left-[19px] h-[47px] w-[118px] border-4 border-[#d02828]" />
    </div>
  )
}
